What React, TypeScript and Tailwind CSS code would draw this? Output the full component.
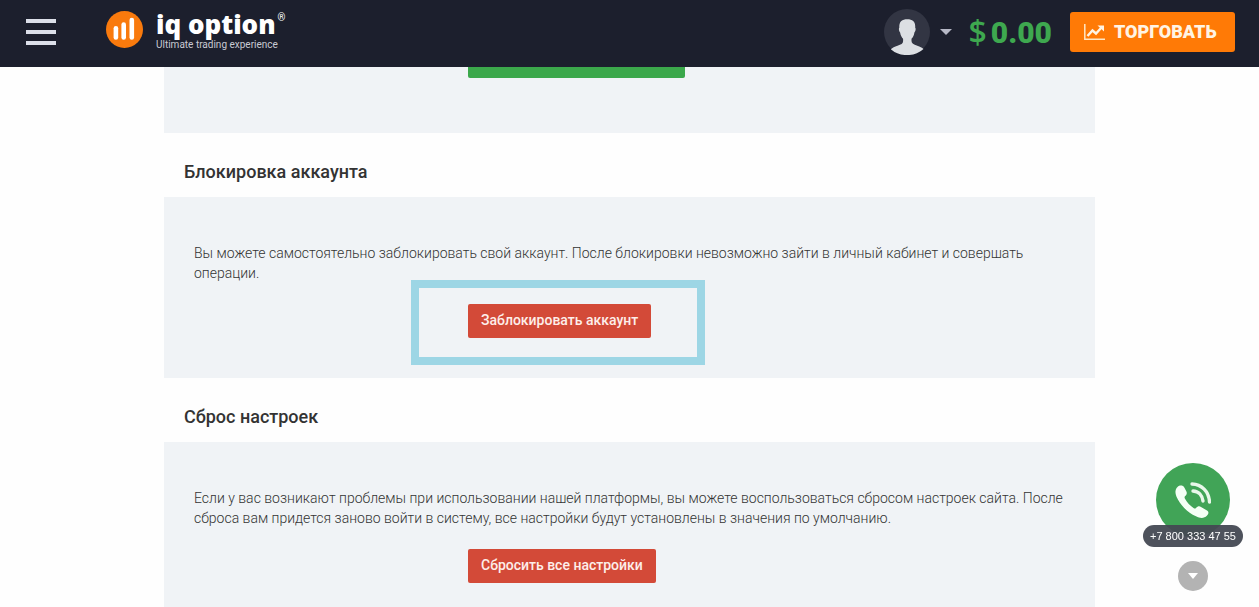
import type { ReactNode } from 'react';

interface SettingsSectionProps {
    title: string;
    text: string;
    children: ReactNode;
}

const Logo = () => (
    <a href="#home" className="flex items-start gap-[13px] text-white">
        <svg viewBox="0 0 37 37" className="mt-[2px] h-[37px] w-[37px]" aria-hidden="true">
            <circle cx="18.5" cy="18.5" r="18.5" fill="#f97a0d" />
            <g stroke="#fff" strokeWidth="4.6" strokeLinecap="round">
                <path d="M9.900 17.300v9.200" />
                <path d="M17.700 13.500v13" />
                <path d="M25.800 9v17.500" />
            </g>
        </svg>
        <span className="block">
            <span className="flex items-start">
                <span className="font-['Noto_Sans','Open_Sans',sans-serif] text-[26px] leading-[30px] font-black">iq option</span>
                <span className="ml-[2px] pt-[3px] text-[10px] leading-[12px]">®</span>
            </span>
            <span className="block text-[10px] leading-[12px] text-[#c9cad3]">Ultimate trading experience</span>
        </span>
    </a>
);

const Header = () => (
    <header className="flex h-[67px] items-start justify-between bg-[#1c1f2d] pt-[9px] pr-6 pl-[26px]">
        <div className="flex items-start gap-[50px]">
            <button type="button" aria-label="Меню" className="mt-[10px] flex w-[30px] flex-col gap-[7px]">
                <span className="h-1 w-full bg-[#dcdfe9]" />
                <span className="h-1 w-full bg-[#dcdfe9]" />
                <span className="h-1 w-full bg-[#dcdfe9]" />
            </button>
            <Logo />
        </div>

        <div className="flex h-[46px] items-center">
            <button type="button" aria-label="Профиль" className="flex items-center gap-[10px]">
                <svg viewBox="0 0 46 46" className="h-[46px] w-[46px]" aria-hidden="true">
                    <circle cx="23" cy="23" r="23" fill="#323543" />
                    <path
                        d="M23.300 10.200c-5.500 0-8.300 2.300-8 8.600-.8.500-.3 4 .8 4.700.6 3.200 1.700 5 3 6.300v2.200c0 2.600-2 3.600-5.600 4.700-3 .9-5 1.900-6.700 3.600A23 23 0 0 0 23 46a23 23 0 0 0 16.500-6c-1.600-1.500-3.300-2.400-6.200-3.300-3.800-1.200-5.800-2.200-5.800-4.700v-2.200c1.400-1.400 2.400-3.100 2.900-6.300 1.100-.7 1.700-4.200.8-4.700.4-6.300-2.500-8.600-7.900-8.600z"
                        fill="#dcdfe3"
                    />
                </svg>
                <svg viewBox="0 0 12 6" className="h-[6px] w-3" aria-hidden="true">
                    <path d="M0 0h12L6 6z" fill="#b6b8c6" />
                </svg>
            </button>
            <span className="ml-4 flex items-center gap-1 text-[#3ea84f]">
                <span className="font-['Open_Sans',sans-serif] text-[32px] leading-8 font-semibold">$</span>
                <span className="pt-px text-[30px] leading-8 font-black">0.00</span>
            </span>
            <button
                type="button"
                className="ml-[18px] flex h-10 w-[165px] items-center gap-[9px] rounded-[3px] bg-[#ff7a06] pl-[14px] text-lg font-black text-[#fff4e4]"
            >
                <svg viewBox="0 0 21 16" className="h-4 w-[21px]" fill="none" aria-hidden="true">
                    <path d="M.8 0v15.200H21" stroke="#ffe6c4" strokeWidth="1.500" />
                    <path d="M3.500 12l5-5.500 3.500 3 5.500-6" stroke="#fff4e4" strokeWidth="2.400" />
                    <path d="M13.500 1.500H20v6z" fill="#fff4e4" />
                </svg>
                ТОРГОВАТЬ
            </button>
        </div>
    </header>
);

const RedButton = ({ children }: { children: ReactNode }) => (
    <button
        type="button"
        className="h-[34px] rounded-[2px] bg-[#d34a38] px-[13px] pb-[2px] text-sm font-medium text-[#fdeeea]"
    >
        {children}
    </button>
);

const SettingsSection = ({ title, text, children }: SettingsSectionProps) => (
    <section>
        <h2 className="flex h-16 items-center px-5 pt-[14px] text-lg font-medium text-[#333]">{title}</h2>
        <div className="bg-[#f0f3f6] px-[30px] pt-[46px] pb-10">
            <p className="text-sm leading-5 font-light text-[#333]">{text}</p>
            <div className="mt-[21px] grid grid-cols-[274px_1fr]">
                <div className="relative col-start-2 flex">{children}</div>
            </div>
        </div>
    </section>
);

const CallWidget = () => (
    <div className="fixed right-4 bottom-4 flex flex-col items-center">
        <a href="tel:+78003334755" className="flex flex-col items-center">
            <span className="flex h-[74px] w-[74px] items-center justify-center rounded-full bg-[#41a457]">
                <svg viewBox="0 0 36 36" className="h-9 w-9" aria-hidden="true">
                    <path
                        d="M2.500 5C4.700 2.800 8 3.200 9.300 5.400l2 3.800c1 2 .5 3.600-1.300 5.100-.7.700-.5 1.500 0 2.500 2.200 4 5 6.800 8.500 9.200 1 .6 1.700.8 2.500 0 1.500-1.500 3-2.200 5-1.100l6 3.600c2 1.200 1.800 3.300-.2 5.300-2.500 2.500-6.300 2.900-10.800.5C12.200 30.300 5 22.800 1.400 14.500-.2 10.600.2 7.300 2.500 5z"
                        fill="#f5fff5"
                    />
                    <g fill="none" stroke="#e8f7ea" strokeWidth="3.400" strokeLinecap="round">
                        <path d="M18 9c5.500.3 9.300 4.500 10 10" />
                        <path d="M17 2c9.500.3 17 7.500 17.500 18" />
                    </g>
                </svg>
            </span>
            <span className="relative -mt-3 flex h-[22px] w-[100px] items-center justify-center rounded-full bg-[#454953]/95 font-['Liberation_Sans',sans-serif] text-[11px] text-white">
                +7 800 333 47 55
            </span>
        </a>
        <button
            type="button"
            aria-label="Свернуть"
            className="mt-[14px] flex h-[30px] w-[30px] items-center justify-center rounded-full bg-[#b3b3b3]"
        >
            <svg viewBox="0 0 10 6" className="h-[6px] w-[10px]" aria-hidden="true">
                <path d="M0 0h10L5 6z" fill="#fff" />
            </svg>
        </button>
    </div>
);

const App = () => {
    return (
        <div className="h-screen overflow-hidden bg-[#fefefe] font-['Roboto',sans-serif]">
            <Header />

            <main className="mx-auto w-full max-w-[931px]">
                {/* Tail of the section scrolled under the header */}
                <div className="grid grid-cols-[274px_1fr] bg-[#f0f3f6] px-[30px] pb-[55px]">
                    <button type="button" aria-label="Сохранить" className="col-start-2 h-[11px] w-[217px] rounded-b-[2px] bg-[#3ba84b]" />
                </div>

                <SettingsSection
                    title="Блокировка аккаунта"
                    text="Вы можете самостоятельно заблокировать свой аккаунт. После блокировки невозможно зайти в личный кабинет и совершать операции."
                >
                    <RedButton>Заблокировать аккаунт</RedButton>
                    <div className="pointer-events-none absolute -top-6 -left-[57px] h-[85px] w-[294px] border-8 border-[#9dd6e5]" />
                </SettingsSection>

                <SettingsSection
                    title="Сброс настроек"
                    text="Если у вас возникают проблемы при использовании нашей платформы, вы можете воспользоваться сбросом настроек сайта. После сброса вам придется заново войти в систему, все настройки будут установлены в значения по умолчанию."
                >
                    <RedButton>Сбросить все настройки</RedButton>
                </SettingsSection>
            </main>

            <CallWidget />
        </div>
    );
};

export default App;
